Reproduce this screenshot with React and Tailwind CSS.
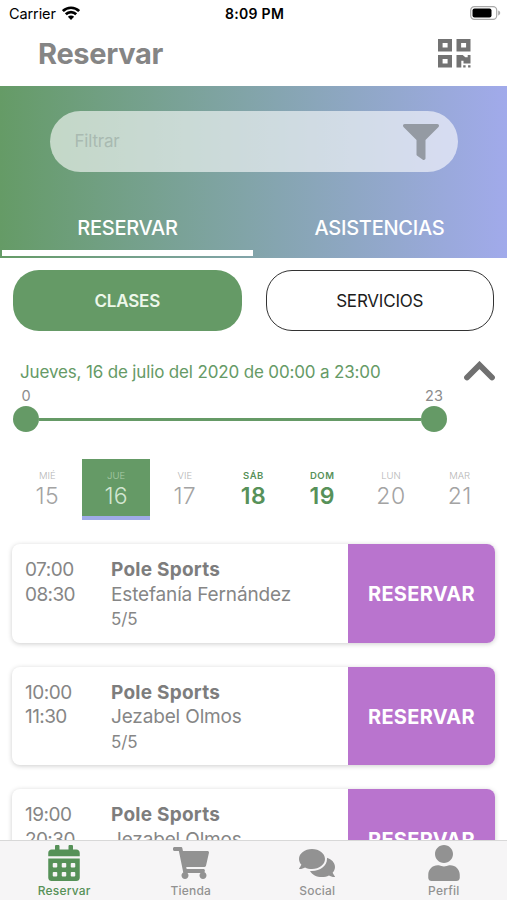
import { FaCalendarAlt, FaComments, FaFilter, FaShoppingCart, FaUser } from "react-icons/fa";

const days = [
  { name: "MIÉ", number: 15 },
  { name: "JUE", number: 16, selected: true },
  { name: "VIE", number: 17 },
  { name: "SÁB", number: 18, weekend: true },
  { name: "DOM", number: 19, weekend: true },
  { name: "LUN", number: 20 },
  { name: "MAR", number: 21 },
];

const classes = [
  { start: "07:00", end: "08:30", title: "Pole Sports", teacher: "Estefanía Fernández", spots: "5/5" },
  { start: "10:00", end: "11:30", title: "Pole Sports", teacher: "Jezabel Olmos", spots: "5/5" },
  { start: "19:00", end: "20:30", title: "Pole Sports", teacher: "Jezabel Olmos", spots: "5/5" },
];

const navItems = [
  { label: "Reservar", Icon: FaCalendarAlt, active: true },
  { label: "Tienda", Icon: FaShoppingCart },
  { label: "Social", Icon: FaComments },
  { label: "Perfil", Icon: FaUser },
];

const StatusBar = () => (
  <div className="grid h-7 grid-cols-3 items-center pl-[9px] pr-[6px] text-black">
    <div className="flex items-center gap-[6px] text-[14.5px] tracking-[-0.1px]">
      <span>Carrier</span>
      <svg viewBox="0 0 18 14" className="h-[14px] w-[18px] -translate-y-px">
        <g fill="none" stroke="currentColor" strokeWidth="2.7">
          <path d="M0.9 5.1a11.5 11.5 0 0 1 16.2 0" />
          <path d="M3.8 8.2a7.4 7.4 0 0 1 10.4 0" />
        </g>
        <path d="M9 14l-3.1-3.2a4.4 4.4 0 0 1 6.2 0z" fill="currentColor" />
      </svg>
    </div>
    <span className="pb-px pr-px text-center text-[14px] font-semibold tracking-[0.3px]">8:09 PM</span>
    <svg viewBox="0 0 31 14" className="mb-[2px] h-[14px] w-[31px] justify-self-end">
      <rect x="0.7" y="0.7" width="26" height="12.6" rx="3.6" fill="none" stroke="#a9a9a9" strokeWidth="1.2" />
      <rect x="2.5" y="2.4" width="19" height="9.2" rx="2" fill="#000" />
      <path d="M28.2 4.6v4.8c1.5-.6 2-1.4 2-2.4s-.5-1.8-2-2.4z" fill="#a9a9a9" />
    </svg>
  </div>
);

const QrIcon = () => (
  <svg viewBox="0 0 33 29" className="h-[29px] w-[33px]" fill="#737373">
    <path fillRule="evenodd" d="M0 0h14v12.5H0zM4.6 4v4.5h5V4z" />
    <path fillRule="evenodd" d="M18.5 0h14v12.5h-14zM23.1 4v4.5h5V4z" />
    <path fillRule="evenodd" d="M0 16h14v12.5H0zM4.6 20v4.5h5V20z" />
    <path d="M18.5 16h6.2l2.6 2.2h2.4V16h2.8v8.4h-7v-2.6h-2.2v6.7h-4.8z" />
    <path d="M25.2 26.3h2.4v2.2h-2.4zM30.1 26.3h2.4v2.2h-2.4z" />
  </svg>
);

const Day = ({ day }) => {
  if (day.selected) {
    return (
      <div className="flex h-[61px] flex-col items-center border-b-4 border-[#9fabe8] bg-[#659a66] pt-[10.5px] text-[#a9cba8]">
        <span className="text-[9.5px] font-light leading-3">{day.name}</span>
        <span className="text-[23px] font-light leading-[29px] tracking-[0.2px] text-[#d3e6d1]">{day.number}</span>
      </div>
    );
  }
  return (
    <div
      className={
        day.weekend
          ? "flex h-[61px] flex-col items-center pt-[10.5px] font-semibold text-[#579159]"
          : "flex h-[61px] flex-col items-center pt-[10.5px] font-light text-[#a3a3a3]"
      }
    >
      <span className={day.weekend ? "text-[9.5px] leading-3 tracking-[0.5px]" : "text-[9.5px] leading-3 text-[#b5b5b5]"}>
        {day.name}
      </span>
      <span className="text-[23px] leading-[29px] tracking-[0.4px]">{day.number}</span>
    </div>
  );
};

const ClassCard = ({ item }) => (
  <div className="flex h-[98.7px] shrink-0 overflow-hidden rounded-lg bg-white text-[#868686] shadow-[0_1px_5px_rgba(0,0,0,0.2)]">
    <div className="w-[99px] shrink-0 pl-[13px] pt-[14px] text-[19px] leading-[24.5px] tracking-[-0.5px]">
      <p>{item.start}</p>
      <p className="tracking-[-0.6px]">{item.end}</p>
    </div>
    <div className="flex-1 whitespace-nowrap pt-[14px] text-[19px] leading-[24.5px] tracking-[-0.15px]">
      <p className="font-bold tracking-[0.25px] text-[#7d7d7d]">{item.title}</p>
      <p>{item.teacher}</p>
      <p className="text-[17px]">{item.spots}</p>
    </div>
    <button className="w-[147px] shrink-0 bg-[#b974ce] pt-[2px] text-[20px] font-bold tracking-[0.3px] text-white">
      RESERVAR
    </button>
  </div>
);

const App = () => {
  return (
    <div className="flex h-[900px] w-[507px] flex-col overflow-hidden bg-white font-['Inter',sans-serif]">
      <StatusBar />

      <header className="flex h-[58px] items-center justify-between pb-2 pl-[38px] pr-[36px] text-[#858585]">
        <h1 className="text-[29px] font-bold leading-none tracking-[-0.3px]">Reservar</h1>
        <QrIcon />
      </header>

      <div className="flex h-[172px] shrink-0 flex-col bg-linear-to-r from-[#659b66] to-[#a1aaeb] pt-[25px]">
        <div className="mx-auto flex h-[61px] w-[408px] items-center justify-between rounded-full bg-white/60 pl-[25px] pr-[19px]">
          <span className="text-[17px] tracking-[-0.2px] text-[#a9bab1]">Filtrar</span>
          <FaFilter className="size-9 text-[#949aa3]" />
        </div>
        <div className="mt-auto grid h-[60px] grid-cols-2 gap-px px-[2px] pb-[2px] text-[20px] font-medium tracking-[-0.25px] text-white">
          <button className="border-b-6 border-white pt-[7px]">RESERVAR</button>
          <button className="border-b-6 border-transparent pt-[7px]">ASISTENCIAS</button>
        </div>
      </div>

      <div className="grid grid-cols-2 gap-6 px-[13px] pt-3 text-[17px] tracking-[-0.2px]">
        <button className="h-[61px] rounded-[26px] bg-[#659a66] pt-[2px] font-semibold text-[#edf7ea]">CLASES</button>
        <button className="h-[61px] rounded-[26px] border-[1.5px] border-[#333] pt-[2px] text-[#1c1c1c]">SERVICIOS</button>
      </div>

      <div className="flex h-[56px] shrink-0 items-end justify-between pl-5 pr-[12px]">
        <p className="whitespace-nowrap text-[17px] leading-[30px] tracking-[-0.15px] text-[#659a66]">
          Jueves, 16 de julio del 2020 de 00:00 a 23:00
        </p>
        <svg viewBox="0 0 31 20" className="mb-[6px] h-5 w-[31px]">
          <path d="M3 16.5L15.5 4L28 16.5" fill="none" stroke="#707070" strokeWidth="5.8" strokeLinecap="round" />
        </svg>
      </div>

      <div className="w-[447px] shrink-0 pl-[13px]">
        <div className="flex justify-between pb-px text-center text-[14.5px] leading-[18px] text-[#8b8b8b]">
          <span className="w-[26px]">0</span>
          <span className="w-[26px]">23</span>
        </div>
        <div className="flex items-center">
          <span className="size-[26px] rounded-full bg-[#659a66]" />
          <span className="h-[3px] flex-1 bg-[#659a66]" />
          <span className="size-[26px] rounded-full bg-[#659a66]" />
        </div>
      </div>

      <div className="mt-[27px] grid shrink-0 grid-cols-7 px-[13px]">
        {days.map((day) => (
          <Day key={day.number} day={day} />
        ))}
      </div>

      <main className="flex min-h-0 flex-1 flex-col gap-6 overflow-hidden px-[12px] pt-6">
        {classes.map((item) => (
          <ClassCard key={item.start} item={item} />
        ))}
      </main>

      <nav className="grid h-[60px] shrink-0 grid-cols-4 border-t border-[#d8d8d8] bg-[#f6f5f6] pl-px">
        {navItems.map(({ label, Icon, active }) => (
          <div
            key={label}
            className={
              active
                ? "flex flex-col items-center pt-[4px] text-[#569158]"
                : "flex flex-col items-center pt-[4px] text-[#929292]"
            }
          >
            <Icon className="size-9" />
            <span className="mt-[2px] text-[12px] font-medium leading-4 tracking-[0.2px]">{label}</span>
          </div>
        ))}
      </nav>
    </div>
  );
};

export default App;
